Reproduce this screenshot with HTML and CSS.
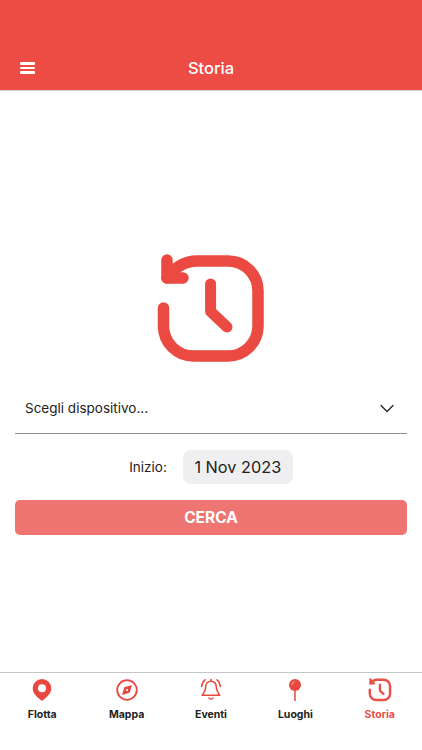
FILE: index.html
```html
<!DOCTYPE html>
<html lang="it">
<head>
    <meta charset="UTF-8">
    <meta name="viewport" content="width=device-width, initial-scale=1.0">
    <title>Storia</title>
    <link rel="stylesheet" href="styles.css">
</head>
<body>
    <svg class="defs" width="0" height="0">
        <symbol id="history" viewBox="0 0 112 112">
            <path d="M8.5 55V73a30 30 0 0 0 30 30H73a30 30 0 0 0 30-30V38A30 30 0 0 0 73 8H42C30 8 20 14 12 25" fill="none" stroke="currentColor" stroke-width="11.5" stroke-linecap="round"/>
            <path d="M12 7V25H28" fill="none" stroke="currentColor" stroke-width="11.5" stroke-linecap="round" stroke-linejoin="round"/>
            <path d="M55.6 31V58.6L72 74" fill="none" stroke="currentColor" stroke-width="11" stroke-linecap="round" stroke-linejoin="round"/>
        </symbol>
    </svg>

    <header class="topbar">
        <div class="menu-btn">
            <span></span><span></span><span></span>
        </div>
        <h1 class="title">Storia</h1>
    </header>

    <main class="content">
        <svg class="hero-icon" width="112" height="112"><use href="#history"/></svg>

        <div class="select-row">
            <span>Scegli dispositivo...</span>
            <svg width="14" height="9" viewBox="0 0 14 9"><path d="M1 1.5L7 7.5L13 1.5" fill="none" stroke="#222" stroke-width="1.3" stroke-linecap="round" stroke-linejoin="round"/></svg>
        </div>

        <div class="date-row">
            <span class="date-label">Inizio:</span>
            <span class="date-pill">1 Nov 2023</span>
        </div>

        <div class="search-btn">CERCA</div>
    </main>

    <nav class="tabbar">
        <div class="tab">
            <svg width="24" height="24" viewBox="0 0 24 24"><path fill-rule="evenodd" d="M12 1a9.3 9.3 0 0 1 9.3 9.3c0 4-2.600 7.600-9.300 12.700C5.300 17.900 2.700 14.300 2.700 10.300A9.300 9.300 0 0 1 12 1Zm0 5.300a4 4 0 1 0 0 8 4 4 0 0 0 0-8Z" fill="#e8483f"/></svg>
            <span>Flotta</span>
        </div>
        <div class="tab">
            <svg width="24" height="24" viewBox="0 0 24 24"><circle cx="12" cy="12" r="9.800" fill="none" stroke="#e8483f" stroke-width="1.800"/><path fill-rule="evenodd" d="M17 7l-2.300 7.700L7 17l2.300-7.700ZM12 10.900a1.100 1.100 0 1 0 0 2.200 1.100 1.100 0 0 0 0-2.200Z" fill="#e8483f"/></svg>
            <span>Mappa</span>
        </div>
        <div class="tab">
            <svg width="24" height="24" viewBox="0 0 24 24" fill="none" stroke="#e8483f" stroke-width="1.500" stroke-linecap="round" stroke-linejoin="round"><path d="M12 3.300c-3.200 0-5.300 2.400-5.300 5.500 0 3.500-1.500 5.800-3.500 8.500h17.600c-2-2.700-3.500-5-3.500-8.500 0-3.100-2.100-5.500-5.300-5.500Z"/><path d="M12 1.500V3.300"/><path d="M10 20c.7 1.300 3.300 1.300 4 0"/><path d="M6 1.800C4 3.300 3 5.500 2.700 8.500"/><path d="M18 1.800c2 1.500 3 3.700 3.300 6.700"/></svg>
            <span>Eventi</span>
        </div>
        <div class="tab">
            <svg width="24" height="24" viewBox="0 0 24 24"><circle cx="12" cy="7" r="6" fill="#e8483f"/><path d="M12 12v11" stroke="#e8483f" stroke-width="1.500"/><path d="M8.800 6.500a3 3 0 0 1 2.400-2.600" fill="none" stroke="#f7b5b0" stroke-width="1" stroke-linecap="round"/></svg>
            <span>Luoghi</span>
        </div>
        <div class="tab active">
            <svg width="24" height="24"><use href="#history"/></svg>
            <span>Storia</span>
        </div>
    </nav>
</body>
</html>
```

FILE: styles.css
```css
* {
    box-sizing: border-box;
}
html, body {
    height: 100%;
}
body {
    margin: 0;
    display: flex;
    flex-direction: column;
    font-family: Inter, "Liberation Sans", sans-serif;
    color: #222;
    background: white;
    overflow: hidden;
}
.defs {
    position: absolute;
}
.topbar {
    height: 91px;
    flex-shrink: 0;
    background: #ec4c43;
    border-bottom: 1px solid #d9d2d1;
    display: flex;
    align-items: flex-end;
    justify-content: center;
    padding-bottom: 10px;
    position: relative;
}
.menu-btn {
    position: absolute;
    left: 20px;
    bottom: 16px;
    width: 15px;
    display: flex;
    flex-direction: column;
    gap: 2px;
}
.menu-btn span {
    height: 2.700px;
    background: white;
    border-radius: 1px;
}
.title {
    margin: 0;
    font-size: 16.500px;
    font-weight: 500;
    line-height: 24px;
    color: white;
}
.content {
    flex: 1;
    display: flex;
    flex-direction: column;
    align-items: center;
    padding: 162px 15px 0;
}
.hero-icon {
    color: #ea4a41;
    display: block;
}
.select-row {
    width: 100%;
    height: 50px;
    margin-top: 19px;
    padding: 0 13px 0 10px;
    display: flex;
    align-items: center;
    justify-content: space-between;
    border-bottom: 1px solid #8e8e8e;
    font-size: 13.500px;
    padding-bottom: 1px;
}
.date-row {
    display: flex;
    align-items: center;
    gap: 16px;
    margin-top: 16px;
}
.date-label {
    font-size: 13.500px;
}
.date-pill {
    width: 110px;
    height: 34px;
    display: flex;
    align-items: center;
    justify-content: center;
    background: #efeff1;
    border-radius: 8px;
    font-size: 16.300px;
}
.search-btn {
    width: 100%;
    height: 35px;
    margin-top: 16px;
    display: flex;
    align-items: center;
    justify-content: center;
    background: #ee7572;
    border-radius: 5px;
    color: white;
    font-size: 15.500px;
    font-weight: 700;
}
.tabbar {
    height: 78px;
    flex-shrink: 0;
    display: grid;
    grid-template-columns: repeat(5, 1fr);
    border-top: 1px solid #c4c4c4;
    padding-top: 5px;
}
.tab {
    display: flex;
    flex-direction: column;
    align-items: center;
    gap: 6px;
    font-size: 10.500px;
    font-weight: 700;
    color: #222;
}
.tab svg {
    display: block;
}
.tab.active {
    color: #e8504a;
}
```
